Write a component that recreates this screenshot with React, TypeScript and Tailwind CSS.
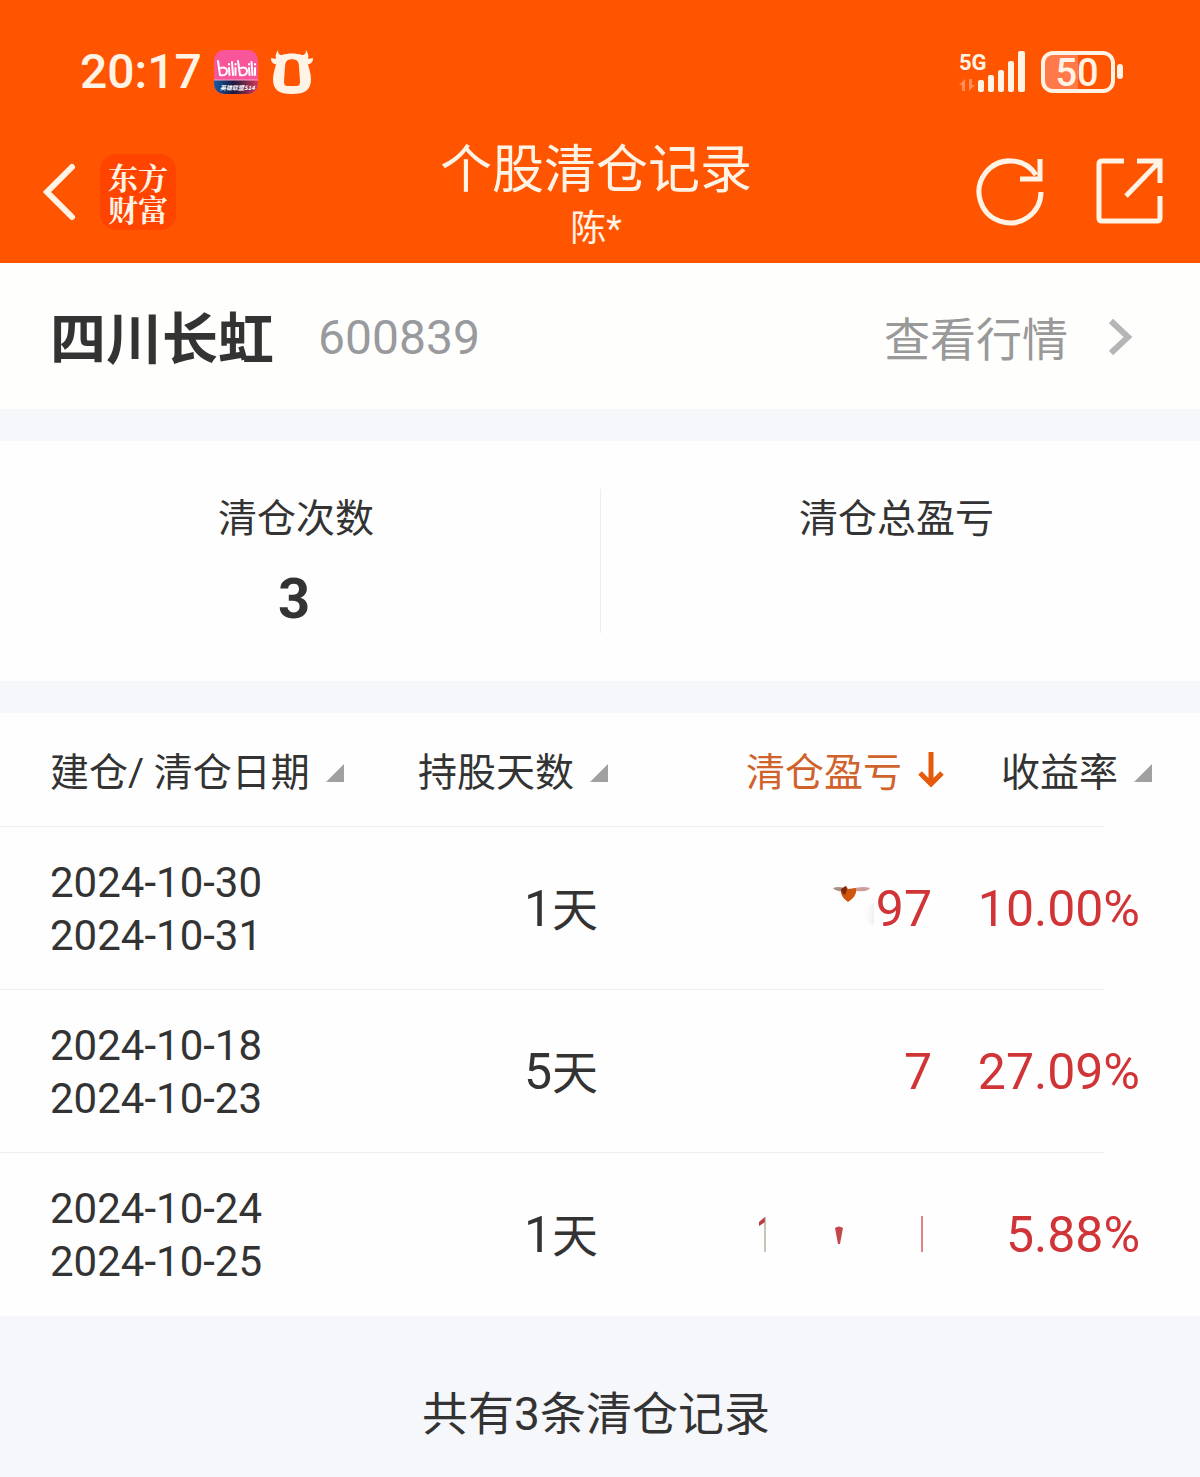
import { useState } from "react";
import type { ReactNode } from "react";

type SortKey = "date" | "days" | "profit" | "rate";

type RecordRow = {
  open: string;
  close: string;
  days: number;
  profit: ReactNode;
  rate: string;
};

const records: RecordRow[] = [
  {
    open: "2024-10-30",
    close: "2024-10-31",
    days: 1,
    profit: (
      <span className="flex items-center justify-end">
        <MaskedWings />
        97
      </span>
    ),
    rate: "10.00%",
  },
  {
    open: "2024-10-18",
    close: "2024-10-23",
    days: 5,
    profit: "7",
    rate: "27.09%",
  },
  {
    open: "2024-10-24",
    close: "2024-10-25",
    days: 1,
    profit: <MaskedDigits />,
    rate: "5.88%",
  },
];

// What is left of the hidden amount in the first row
function MaskedWings() {
  return (
    <svg width="46" height="60" viewBox="0 0 46 60" aria-hidden="true">
      <defs>
        <linearGradient id="smudge">
          <stop offset="0" stopColor="#fefefe" stopOpacity="0" />
          <stop offset="1" stopColor="#f0f0f2" />
        </linearGradient>
      </defs>
      <path d="M30 34q8-8 14-10v22q-8-2-14-12z" fill="url(#smudge)" />
      <path d="M3 9c5-2 9-1 14 1v2C11 13 5 12 3 9z" fill="#a98f89" />
      <path d="M22 10c6-2 12-3 18-1-2 4-11 4-18 2z" fill="#cf9d9b" />
      <path d="M11 10l5-3 2 3 8-1c1 6-2 10-8 14-4-3-8-7-7-13z" fill="#d0560c" />
      <path d="M11 10l5-3 1 4-2 5c-2-1-4-3-4-6z" fill="#7d2a12" />
    </svg>
  );
}

// Strokes still visible from the hidden amount in the last row
function MaskedDigits() {
  return (
    <svg
      className="ml-auto"
      width="176"
      height="60"
      viewBox="0 0 176 60"
      aria-hidden="true"
    >
      <path d="M3 17l6-5v5l-6 4z" fill="#c0393a" />
      <path d="M9 12v35" stroke="#8d8a78" strokeWidth="1" />
      <path d="M79 23q4-3 8 0l-3 16h-2z" fill="#c2494b" />
      <path d="M166 11v36" stroke="#d4595c" strokeWidth="1.5" />
    </svg>
  );
}

function BilibiliIcon() {
  return (
    <svg width="46" height="46" viewBox="0 0 46 46" aria-hidden="true">
      <defs>
        <linearGradient id="band">
          <stop offset="0" stopColor="#1560a8" />
          <stop offset=".45" stopColor="#1c1a3c" />
          <stop offset="1" stopColor="#d93a5c" />
        </linearGradient>
        <clipPath id="tile">
          <rect x="1" y="1" width="44" height="44" rx="10" />
        </clipPath>
      </defs>
      <g clipPath="url(#tile)">
        <rect width="46" height="46" fill="#f8559b" />
        <rect y="31" width="46" height="15" fill="url(#band)" />
        <path d="M0 31h46" stroke="#f9a6c8" strokeWidth="1" />
      </g>
      <g stroke="#fff" strokeWidth="2" fill="none" strokeLinecap="round">
        <path d="M5 12l2 14c5 1 7-1 7-4s-3-4-6-3" />
        <path d="M16 19l.5 7M16 15v.5M19 13l1 13M22.5 19v7M22.5 15v.5" />
        <path d="M25 12l2 14c5 1 7-1 7-4s-3-4-6-3" />
        <path d="M36 19l.5 7M36 15v.5M38.5 13l1 13M42 19v7M42 15v.5" />
      </g>
      <text
        x="7"
        y="41"
        fill="#fff"
        fontSize="6"
        fontWeight="700"
        fontStyle="italic"
        fontFamily="Noto Sans CJK SC, sans-serif"
      >
        英雄联盟S14
      </text>
    </svg>
  );
}

function BullIcon() {
  return (
    <svg width="44" height="46" viewBox="0 0 44 46" aria-hidden="true">
      <path
        fill="#fff3e6"
        fillRule="evenodd"
        d="M8 1c0 3 1 5 4 5 6-2 14-2 20 0 3 0 4-2 4-5 2 3 3 6 2 9l5-1c0 4-2 6-5 6 1 5 3 10 3 15 0 11-6 15-19 15S3 41 3 30c0-5 2-10 3-15-3 0-5-2-5-6l5 1C5 7 6 4 8 1zM18 11c-2 1-3 3-3 7l-1 14c0 4 1 5 4 5h8c3 0 4-1 4-5l-1-14c0-4-1-6-3-7-2-1-6-1-8 0z"
      />
    </svg>
  );
}

function SignalIcon() {
  return (
    <svg width="68" height="44" viewBox="0 0 68 44" aria-hidden="true">
      <text
        x="1"
        y="20"
        fill="#fff3e6"
        fontSize="22"
        fontWeight="700"
        fontFamily="Roboto, sans-serif"
      >
        5G
      </text>
      <path d="M1 35l6-6v12H4v-6zM17 35l-6 6V29h3v6z" fill="#ff8f5c" />
      <g fill="#fff3e6">
        <rect x="20" y="30" width="6" height="12" rx="2" />
        <rect x="30" y="25" width="6" height="17" rx="2" />
        <rect x="40" y="20" width="6" height="22" rx="2" />
        <rect x="50" y="11" width="6" height="31" rx="2" />
        <rect x="60" y="1" width="7" height="41" rx="2" />
      </g>
    </svg>
  );
}

function BatteryIcon() {
  return (
    <svg width="84" height="44" viewBox="0 0 84 44" aria-hidden="true">
      <path d="M13 3h25v38H13A10 10 0 0 1 3 31V13A10 10 0 0 1 13 3z" fill="#ff7a48" />
      <rect
        x="3"
        y="3"
        width="70"
        height="38"
        rx="10"
        fill="none"
        stroke="#fff3e6"
        strokeWidth="4"
      />
      <rect x="77" y="14" width="6" height="15" rx="3" fill="#fff3e6" />
      <text
        x="37"
        y="36"
        textAnchor="middle"
        fill="#fff3e6"
        fontSize="38"
        fontWeight="500"
        fontFamily="Roboto, sans-serif"
      >
        50
      </text>
    </svg>
  );
}

function StatusBar() {
  return (
    <div className="flex h-[100px] items-center justify-between pt-11 pr-[76px] pl-20">
      <div className="flex items-center gap-[11px]">
        <span className="text-[48px] leading-none font-medium">20:17</span>
        <BilibiliIcon />
        <BullIcon />
      </div>
      <div className="flex items-center gap-3.5">
        <SignalIcon />
        <BatteryIcon />
      </div>
    </div>
  );
}

function NavBar() {
  return (
    <div className="grid grid-cols-[1fr_auto_1fr] items-center pt-[41px] pr-9 pb-5 pl-7">
      <div className="flex items-center gap-5">
        <button type="button" aria-label="返回" className="pl-3">
          <svg width="40" height="60" viewBox="0 0 40 60" fill="none">
            <path
              d="M32 5L7 30l25 25"
              stroke="#fff3e6"
              strokeWidth="6"
              strokeLinecap="round"
            />
          </svg>
        </button>
        <div className="w-[76px] rounded-2xl bg-[#ff4400] px-2 py-1.5 font-['Noto_Serif_CJK_SC','Noto_Sans_CJK_SC',sans-serif] text-[30px] leading-8 font-bold">
          东方财富
        </div>
      </div>
      <div className="text-center">
        <h1 className="text-[52px] leading-[60px]">个股清仓记录</h1>
        <p className="mt-3.5 text-[36px] leading-7">陈*</p>
      </div>
      <div className="flex items-center justify-end gap-[50px]">
        <button type="button" aria-label="刷新">
          <svg width="70" height="70" viewBox="0 0 70 70" fill="none">
            <path d="M65 35A31 31 0 1 1 60 18" stroke="#fff3e6" strokeWidth="5" />
            <path d="M64 2v20H44" stroke="#fff3e6" strokeWidth="5" />
          </svg>
        </button>
        <button type="button" aria-label="分享">
          <svg width="68" height="70" viewBox="0 0 68 70" fill="none">
            <g stroke="#fff3e6" strokeWidth="5">
              <path d="M28 4H6Q3 4 3 7v54q0 3 3 3h55q3 0 3-3V39" />
              <path d="M41 4h23v22M64 4L30 39" />
            </g>
          </svg>
        </button>
      </div>
    </div>
  );
}

function SortButton({
  label,
  active,
  onClick,
}: {
  label: string;
  active: boolean;
  onClick: () => void;
}) {
  return (
    <button
      type="button"
      onClick={onClick}
      className={
        active
          ? "inline-flex items-center gap-4 whitespace-nowrap text-[#d0632c]"
          : "inline-flex items-center gap-4 whitespace-nowrap"
      }
    >
      <span className="pt-1.5">{label}</span>
      {active ? (
        <svg width="26" height="40" viewBox="0 0 26 40" fill="none">
          <path d="M13 2v33M2 23l11 11 11-11" stroke="#e65a0c" strokeWidth="5" />
        </svg>
      ) : (
        <svg className="mt-1.5" width="18" height="18" viewBox="0 0 18 18">
          <path d="M18 0v18H0z" fill="#a0a0a0" />
        </svg>
      )}
    </button>
  );
}

export default function App() {
  const [sort, setSort] = useState<SortKey>("profit");

  const line =
    "relative after:absolute after:bottom-0 after:left-0 after:right-24 after:h-px after:bg-[#eeeeee]";

  return (
    <div className="min-h-screen bg-[#f6f7fb] font-['Roboto','Noto_Sans_CJK_SC',sans-serif] text-[#333333]">
      <header className="bg-[#ff5500] text-[#fff3e6]">
        <StatusBar />
        <NavBar />
      </header>

      <main>
        <section className="flex h-[146px] items-center justify-between bg-[#fefefd] pt-1 pr-[66px] pl-[50px]">
          <div className="flex items-center gap-11">
            <h2 className="pt-1 text-[56px] leading-none font-bold">四川长虹</h2>
            <span className="text-[48px] leading-none text-[#999a9e]">600839</span>
          </div>
          <a href="#quote" className="flex items-center gap-9 text-[46px] leading-none text-[#999999]">
            <span className="pt-1">查看行情</span>
            <svg width="30" height="40" viewBox="0 0 30 40" fill="none">
              <path d="M7 3l17 16L7 35" stroke="#b5b5b5" strokeWidth="6" />
            </svg>
          </a>
        </section>

        <section className="mt-8 grid h-60 grid-cols-2 bg-[#fefefe] py-12 text-center">
          <div className="pt-2.5 pr-2">
            <h3 className="text-[39px] leading-10">清仓次数</h3>
            <p className="mt-8 pr-1 text-[56px] leading-14 font-bold">3</p>
          </div>
          <div className="border-l border-[#eeeeee] pt-2.5 pr-2">
            <h3 className="text-[39px] leading-10">清仓总盈亏</h3>
          </div>
        </section>

        <table className="mt-8 w-full table-fixed bg-[#fefefe]">
          <thead>
            <tr className={`h-[114px] text-[39px] leading-none ${line}`}>
              <th className="w-[30%] pl-[50px] text-left font-normal">
                <SortButton
                  label="建仓/ 清仓日期"
                  active={sort === "date"}
                  onClick={() => setSort("date")}
                />
              </th>
              <th className="w-[21%] pr-1 text-right font-normal">
                <SortButton
                  label="持股天数"
                  active={sort === "days"}
                  onClick={() => setSort("days")}
                />
              </th>
              <th className="w-[28%] pr-1 text-right font-normal">
                <SortButton
                  label="清仓盈亏"
                  active={sort === "profit"}
                  onClick={() => setSort("profit")}
                />
              </th>
              <th className="w-[21%] pr-12 text-right font-normal">
                <SortButton
                  label="收益率"
                  active={sort === "rate"}
                  onClick={() => setSort("rate")}
                />
              </th>
            </tr>
          </thead>
          <tbody>
            {records.map((row, i) => (
              <tr
                key={row.open}
                className={`h-[163px] text-[50px] leading-none ${i < records.length - 1 ? line : ""}`}
              >
                <td className="pl-[50px] text-[42px] leading-[53px]">
                  <div>{row.open}</div>
                  <div>{row.close}</div>
                </td>
                <td className="pr-3.5 text-right">
                  {row.days}
                  <span className="text-[46px]">天</span>
                </td>
                <td className="pr-4 text-right text-[#d03437]">{row.profit}</td>
                <td className="pr-[60px] text-right text-[#d03437]">{row.rate}</td>
              </tr>
            ))}
          </tbody>
        </table>
      </main>

      <footer className="flex justify-center pt-[75px] pr-2 pb-9 text-[46px] leading-[46px]">
        共有3条清仓记录
      </footer>
    </div>
  );
}
